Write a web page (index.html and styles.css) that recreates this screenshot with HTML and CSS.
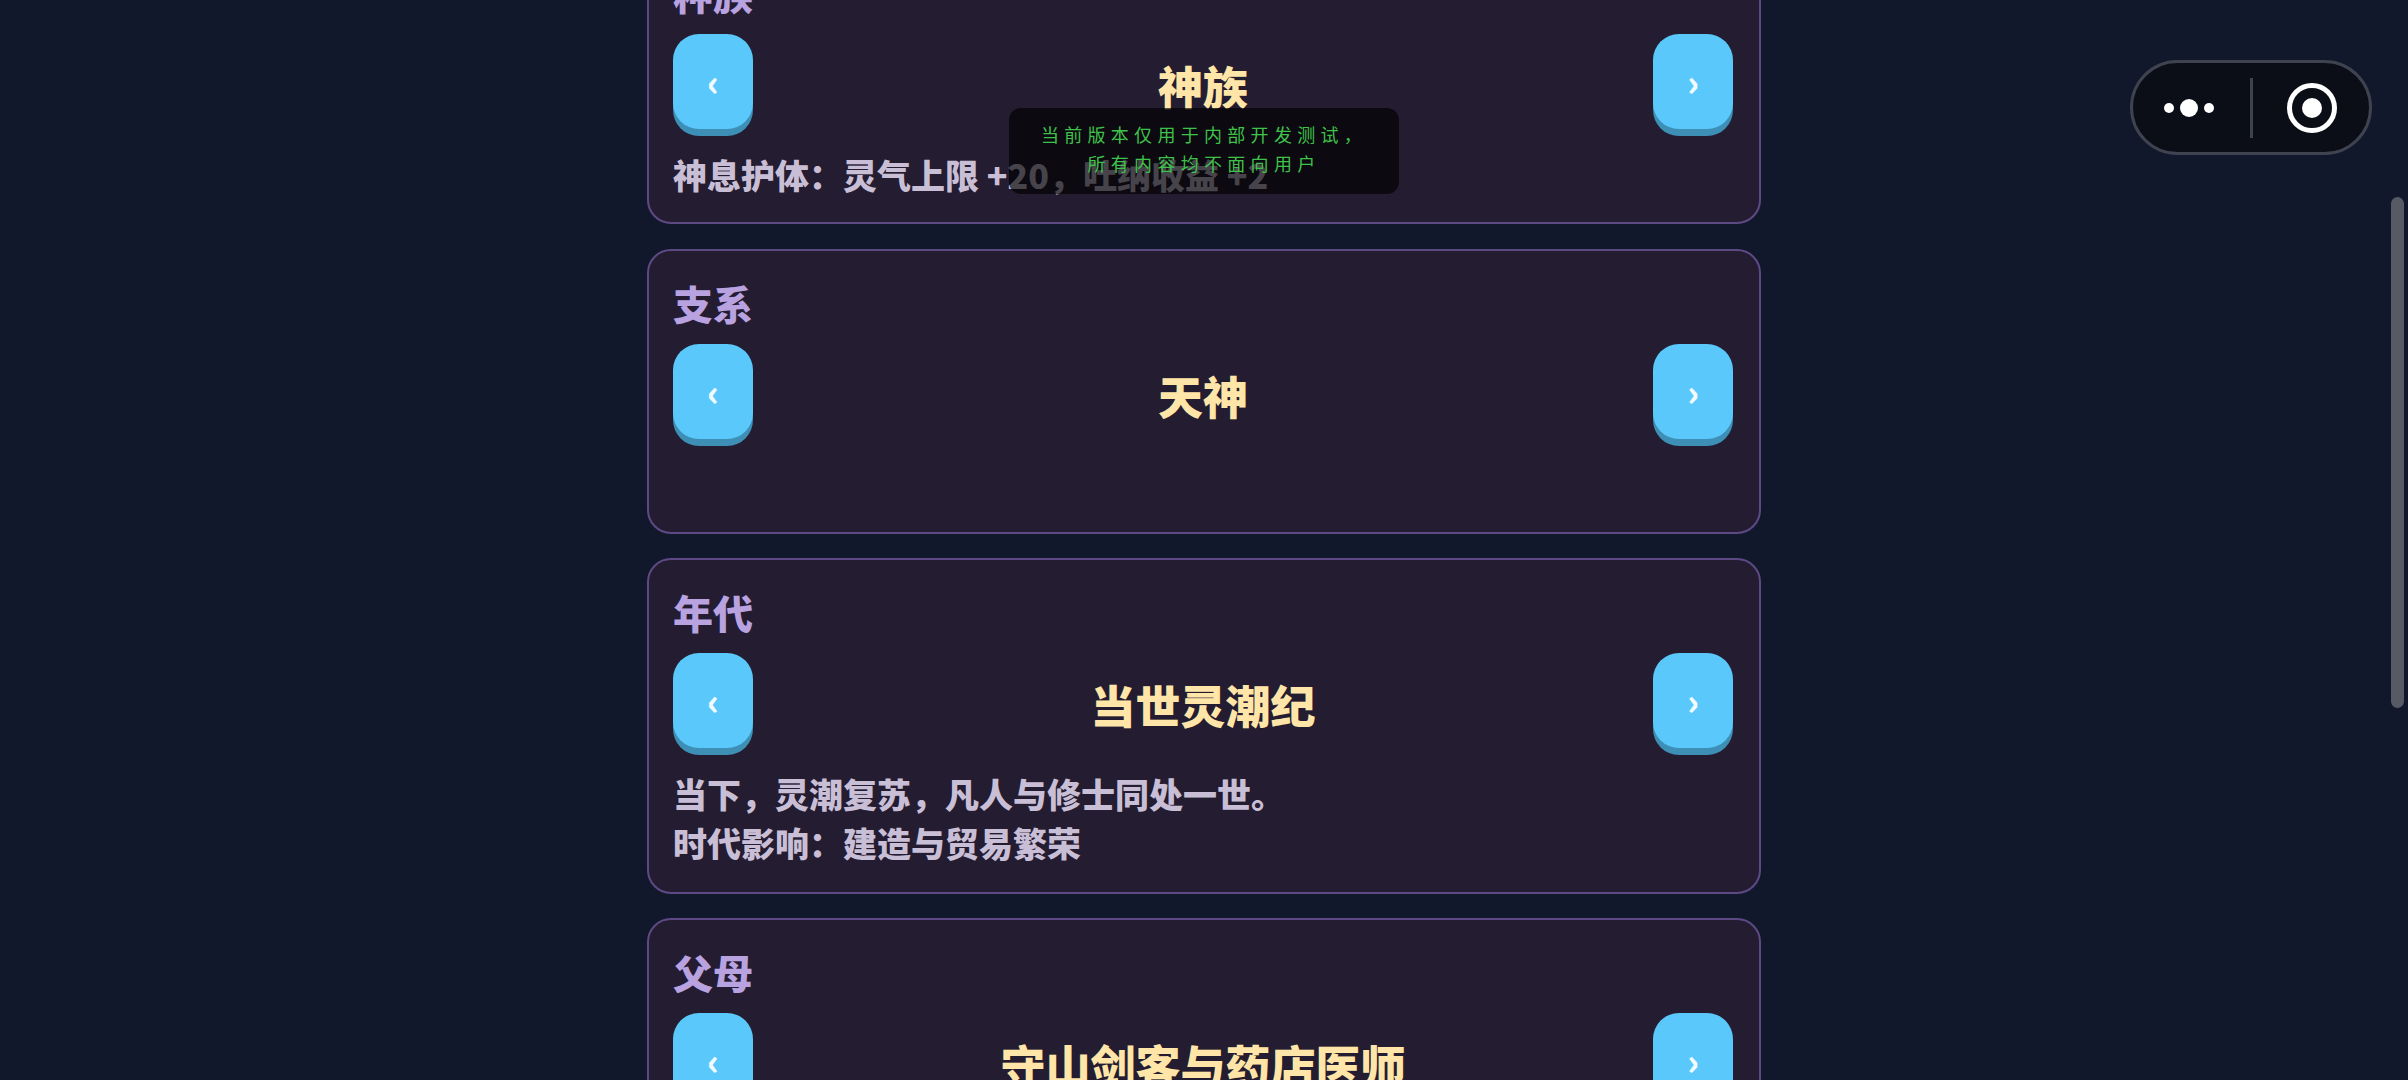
FILE: index.html
```html
<!DOCTYPE html>
<html lang="zh-CN">
<head>
	<meta charset="utf-8">
	<title>角色创建</title>
	<link rel="stylesheet" href="styles.css">
</head>

<body>
	<div class="list">
		<div class="card">
			<div class="card-title">种族</div>
			<div class="picker">
				<button type="button" class="picker-btn">‹</button>
				<span class="picker-value">神族</span>
				<button type="button" class="picker-btn">›</button>
			</div>
			<div class="card-desc">神息护体：灵气上限 +20，吐纳收益 +2</div>
		</div>
		<div class="card">
			<div class="card-title">支系</div>
			<div class="picker">
				<button type="button" class="picker-btn">‹</button>
				<span class="picker-value">天神</span>
				<button type="button" class="picker-btn">›</button>
			</div>
			<div class="card-desc"></div>
		</div>
		<div class="card">
			<div class="card-title">年代</div>
			<div class="picker">
				<button type="button" class="picker-btn">‹</button>
				<span class="picker-value">当世灵潮纪</span>
				<button type="button" class="picker-btn">›</button>
			</div>
			<div class="card-desc card-desc-long">当下，灵潮复苏，凡人与修士同处一世。<br>时代影响：建造与贸易繁荣</div>
		</div>
		<div class="card">
			<div class="card-title">父母</div>
			<div class="picker">
				<button type="button" class="picker-btn">‹</button>
				<span class="picker-value">守山剑客与药店医师</span>
				<button type="button" class="picker-btn">›</button>
			</div>
			<div class="card-desc"></div>
		</div>
	</div>

	<div class="toast">
		<div>当前版本仅用于内部开发测试，</div>
		<div>所有内容均不面向用户</div>
	</div>

	<div class="capsule">
		<svg class="capsule-more" width="117" height="40" viewBox="0 0 117 40">
			<circle cx="36" cy="20" r="5" fill="#fff"/>
			<circle cx="56" cy="20" r="9" fill="#fff"/>
			<circle cx="76" cy="20" r="5" fill="#fff"/>
		</svg>
		<span class="capsule-line"></span>
		<svg class="capsule-close" width="116" height="60" viewBox="0 0 116 60">
			<circle cx="59" cy="30" r="22.500" fill="none" stroke="#fff" stroke-width="5"/>
			<circle cx="59" cy="30" r="10" fill="#fff"/>
		</svg>
	</div>

	<div class="scrollbar"></div>
</body>

</html>
```

FILE: styles.css
```css
html, body{
	margin: 0;
	height: 100%;
}

body{
	background-color: #12182c;
	overflow: hidden;
	font-family: "Noto Sans CJK SC", "Noto Sans", sans-serif;
}

.list{
	width: 1114px;
	margin: -60.800px auto 0;
	display: flex;
	flex-direction: column;
	gap: 24.400px;
}

.card{
	box-sizing: border-box;
	padding: 25px 26px 23px 24px;
	background-color: #241c30;
	border: 2px solid #5d4a85;
	border-radius: 24px;
}

.card-title{
	height: 56px;
	line-height: 54px;
	margin-bottom: 12px;
	font-size: 40px;
	font-weight: 900;
	color: #b8a2e0;
}

.picker{
	display: flex;
	align-items: flex-start;
	justify-content: space-between;
	height: 102px;
}

.picker-btn{
	width: 80px;
	height: 95px;
	padding: 0 0 3px;
	border: 0;
	border-radius: 26px;
	background-color: #5ac8fa;
	box-shadow: 0 7px 0 #3d8fb5;
	font-family: inherit;
	font-size: 36px;
	font-weight: 900;
	color: #f2fbff;
}

.picker-value{
	line-height: 104px;
	font-size: 45px;
	font-weight: 900;
	color: #ffe6a8;
}

.card-desc{
	min-height: 49px;
	margin-top: 14px;
	line-height: 49px;
	font-size: 34px;
	font-weight: 900;
	color: #c8bfd6;
}

.card-desc-long{
	padding-bottom: 2px;
}

.toast{
	position: absolute;
	left: 1009px;
	top: 108px;
	box-sizing: border-box;
	width: 390px;
	height: 86px;
	padding: 12px 0;
	border-radius: 12px;
	background-color: rgba(0, 0, 0, 0.65);
	text-align: center;
	line-height: 29px;
	font-size: 18px;
	font-weight: 400;
	letter-spacing: 5.300px;
	color: #3fc14a;
}

.capsule{
	position: absolute;
	left: 2130px;
	top: 60px;
	box-sizing: border-box;
	width: 242px;
	height: 95px;
	display: flex;
	align-items: center;
	border: 3px solid #3f4350;
	border-radius: 48px;
	background-color: #0b0e17;
}

.capsule-line{
	width: 3px;
	height: 60px;
	background-color: #3f4350;
}

.scrollbar{
	position: absolute;
	left: 2391px;
	top: 197px;
	width: 13px;
	height: 511px;
	border-radius: 7px;
	background-color: #565a65;
}
```
